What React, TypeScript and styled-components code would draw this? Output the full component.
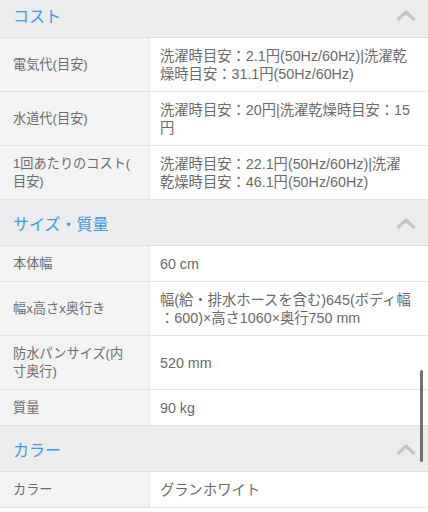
import React from "react";
import styled, { createGlobalStyle } from "styled-components";

const Global = createGlobalStyle`
  html, body { margin: 0; padding: 0; background: #ffffff; }
  body { font-family: "Liberation Sans", "Noto Sans CJK JP", sans-serif; -webkit-font-smoothing: antialiased; }
`;

const Viewport = styled.div`
  position: relative;
  width: 428px;
  height: 512px;
  overflow: hidden;
`;

const Page = styled.div`
  margin-top: -8px;
`;

const SectionHeader = styled.div`
  display: flex;
  align-items: center;
  justify-content: space-between;
  height: 45px;
  padding: 0 12px 0 13px;
  background: #ececee;
  border-bottom: 1px solid #dedee0;
`;

const SectionTitle = styled.span`
  font-family: "Noto Sans CJK JP", sans-serif;
  font-size: 16px;
  color: #3d9be0;
`;

const Row = styled.div`
  display: grid;
  grid-template-columns: 150px 1fr;
  border-bottom: 1px solid #e2e2e2;
`;

const Label = styled.div`
  display: flex;
  align-items: center;
  padding: 8.5px 4px 8.5px 13px;
  background: #f3f3f4;
  border-right: 1px solid #e6e6e6;
  font-size: 13.2px;
  line-height: 18px;
  color: #6d6d6d;
  white-space: pre-line;
`;

const Value = styled.div`
  display: flex;
  align-items: center;
  padding: 8.5px 16.5px 8.5px 10px;
  font-size: 14.3px;
  line-height: 18px;
  color: #6a6a6a;
  line-break: anywhere;
`;

const ScrollThumb = styled.div`
  position: absolute;
  right: 5px;
  top: 370px;
  width: 3px;
  height: 92px;
  border-radius: 2px;
  background: #707070;
`;

const Chevron = () => (
  <svg width="20" height="12" viewBox="0 0 20 12">
    <polyline points="2.5,10 10,3 17.5,10" fill="none" stroke="#c3c4c6" strokeWidth="3.2" strokeLinecap="round" strokeLinejoin="round" />
  </svg>
);

type Item = { label: string; value: string };
type Section = { title: string; items: Item[] };

const sections: Section[] = [
  {
    title: "コスト",
    items: [
      { label: "電気代(目安)", value: "洗濯時目安：2.1円(50Hz/60Hz)|洗濯乾燥時目安：31.1円(50Hz/60Hz)" },
      { label: "水道代(目安)", value: "洗濯時目安：20円|洗濯乾燥時目安：15円" },
      { label: "1回あたりのコスト(\n目安)", value: "洗濯時目安：22.1円(50Hz/60Hz)|洗濯乾燥時目安：46.1円(50Hz/60Hz)" },
    ],
  },
  {
    title: "サイズ・質量",
    items: [
      { label: "本体幅", value: "60 cm" },
      { label: "幅x高さx奥行き", value: "幅(給・排水ホースを含む)645(ボディ幅：600)×高さ1060×奥行750 mm" },
      { label: "防水パンサイズ(内\n寸奥行)", value: "520 mm" },
      { label: "質量", value: "90 kg" },
    ],
  },
  {
    title: "カラー",
    items: [{ label: "カラー", value: "グランホワイト" }],
  },
];

export default function App() {
  return (
    <Viewport>
      <Global />
      <Page>
        {sections.map((s) => (
          <React.Fragment key={s.title}>
            <SectionHeader>
              <SectionTitle>{s.title}</SectionTitle>
              <Chevron />
            </SectionHeader>
            {s.items.map((it) => (
              <Row key={it.label}>
                <Label>{it.label}</Label>
                <Value>{it.value}</Value>
              </Row>
            ))}
          </React.Fragment>
        ))}
      </Page>
      <ScrollThumb />
    </Viewport>
  );
}
